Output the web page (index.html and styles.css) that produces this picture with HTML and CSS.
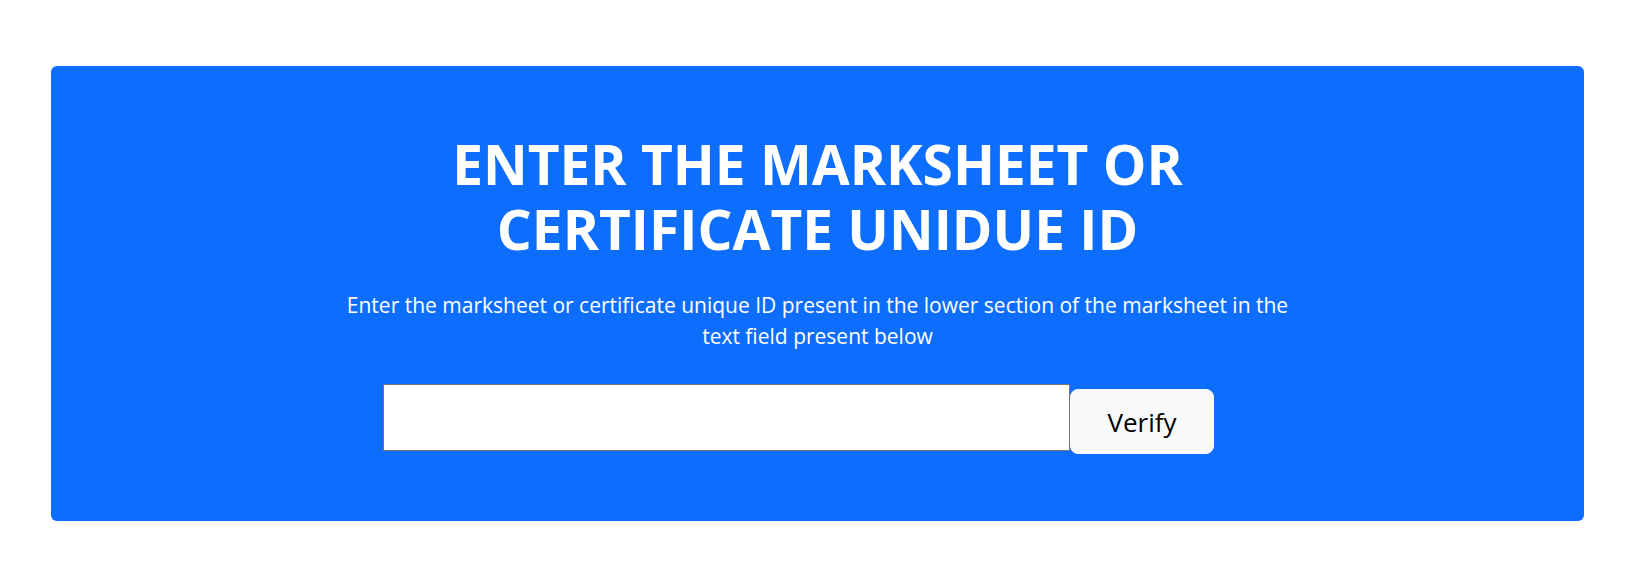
FILE: index.html
```html
<!DOCTYPE html>
<html lang="en">
<head>
<meta charset="utf-8">
<title>Verify Marksheet</title>
<link rel="stylesheet" href="styles.css">
</head>
<body>
<section class="hero">
  <h1 class="hero-title">ENTER THE MARKSHEET OR<br>CERTIFICATE UNIDUE ID</h1>
  <p class="hero-text">Enter the marksheet or certificate unique ID present in the lower section of the marksheet in the text field present below</p>
  <form class="verify-form">
    <input class="verify-input" type="text" aria-label="Unique ID">
    <button class="verify-btn" type="button">Verify</button>
  </form>
</section>
</body>
</html>
```

FILE: styles.css
```css
html, body {
  margin: 0;
  padding: 0;
  background: #ffffff;
}

body {
  font-family: "Open Sans", "Noto Sans", sans-serif;
}

.hero {
  margin: 66px 57px 0 51px;
  height: 455px;
  box-sizing: border-box;
  background: #0d6efd;
  border-radius: 6px;
  padding-top: 65px;
  display: flex;
  flex-direction: column;
  align-items: center;
  color: #ffffff;
  text-align: center;
}

.hero-title {
  margin: 0;
  font-size: 55px;
  font-weight: 700;
  line-height: 65px;
}

.hero-text {
  margin: 29px 0 0;
  width: 960px;
  font-size: 21px;
  line-height: 31px;
}

.verify-form {
  margin-top: 32px;
  display: flex;
  align-items: flex-start;
  padding-right: 38px;
}

.verify-input {
  width: 687px;
  height: 67px;
  box-sizing: border-box;
  border: 1px solid #767676;
  border-radius: 0;
  background: #ffffff;
  margin: 0;
  padding: 0 8px;
  font-size: 20px;
}

.verify-btn {
  margin-top: 5px;
  width: 144px;
  height: 65px;
  box-sizing: border-box;
  border: 1px solid #f8f9fa;
  border-radius: 8px;
  background: #f8f9fa;
  color: #000000;
  font-family: "Open Sans", "Noto Sans", sans-serif;
  font-size: 26px;
  padding: 0;
}
```
